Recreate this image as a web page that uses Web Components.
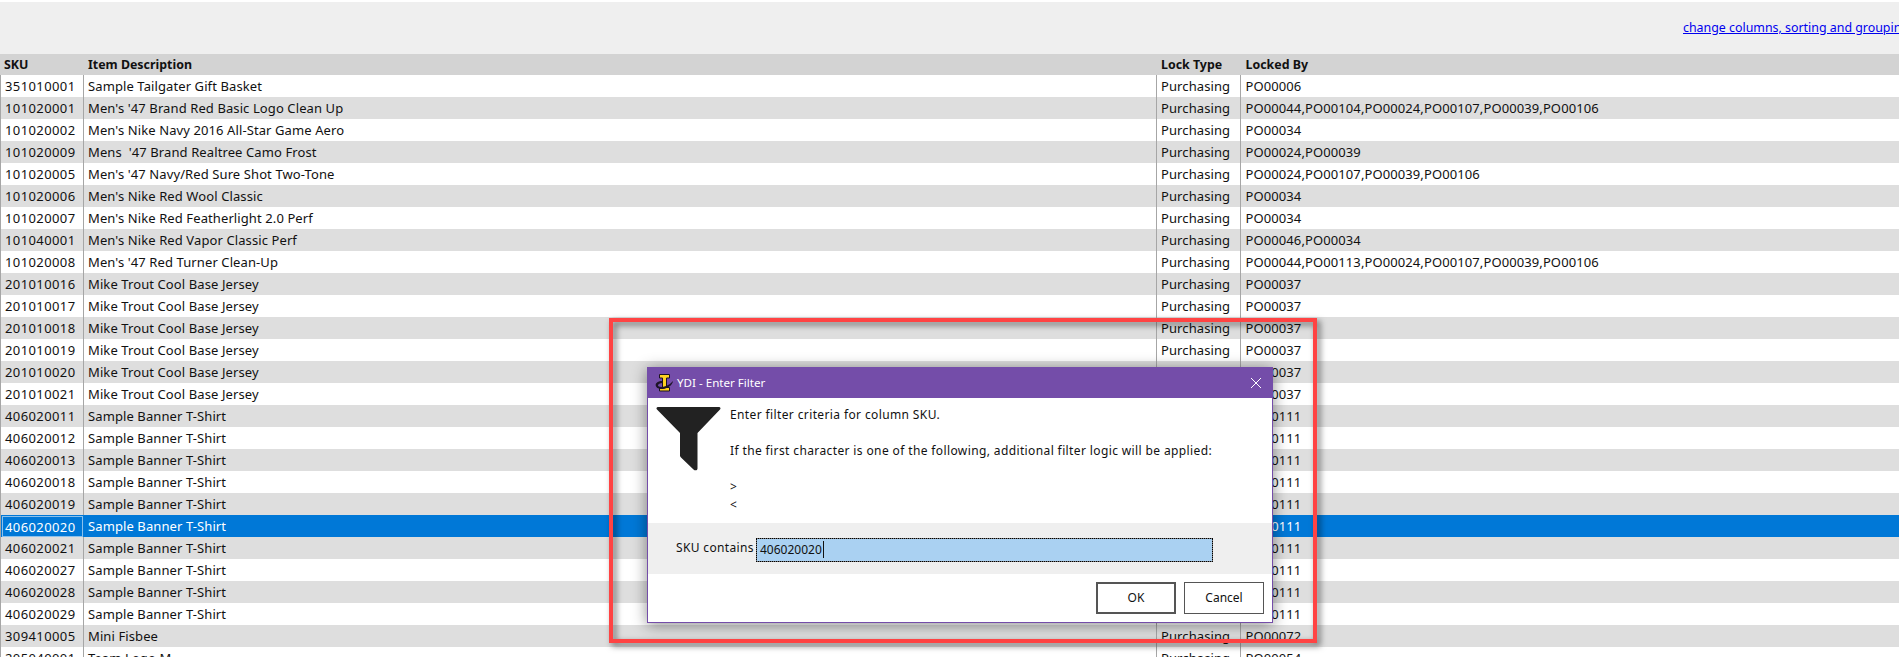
<!DOCTYPE html>
<html>
<head>
<meta charset="utf-8">
<title>Locked Items</title>
<style>
  html, body { margin: 0; padding: 0; height: 657px; overflow: hidden; background: #fff; }
  body { font: 13px "Noto Sans", sans-serif; color: #111; position: relative; }
</style>
</head>
<body>
<grid-toolbar><a href="#">change columns, sorting and grouping</a></grid-toolbar>
<lock-grid></lock-grid>
<red-callout></red-callout>
<filter-dialog></filter-dialog>

<script>
class GridToolbar extends HTMLElement {
  constructor() {
    super();
    this.attachShadow({mode: 'open'}).innerHTML = `
      <style>
        :host { display: block; margin-top: 2px; height: 52px; background: #efefef; overflow: hidden; }
        .links { padding: 17px 0 0 1683px; white-space: nowrap; font-size: 12.4px; line-height: 18px; }
        ::slotted(a) { color: #0000ee; text-decoration: underline; }
      </style>
      <div class="links"><slot></slot></div>
    `;
  }
}
customElements.define('grid-toolbar', GridToolbar);

class LockRow extends HTMLElement {
  constructor() {
    super();
    this.attachShadow({mode: 'open'}).innerHTML = `
      <style>
        :host { display: grid; grid-template-columns: 84px 1073px 84px 1fr; height: 22px; line-height: 23px; background: #fff; white-space: nowrap; }
        :host([alt]) { background: #dedede; }
        :host([head]) { height: 21px; line-height: 21px; background: #d3d3d3; font-weight: 700; font-size: 12.4px; }
        :host([selected]) { background: #0078d7; color: #fff; }
        .cell { box-sizing: border-box; padding-left: 4px; border-right: 1px solid #a6a6a6; overflow: hidden; letter-spacing: .1px; }
        .sku { border-left: 1px solid #a6a6a6; letter-spacing: .4px; }
        .by { border-right: 0; padding-left: 4.5px; }
        :host([head]) .cell { border-color: transparent; letter-spacing: 0; }
        :host([head]) .sku { border-left: 0; }
        :host([selected]) .cell { border-color: transparent; }
        :host([selected]) .sku { border-left-color: #a6a6a6; }
        :host([selected]) .sku span { display: block; margin: 1px 0 1px -3px; padding-left: 2px; height: 19px; line-height: 21px; border: 1px solid #8cc1ec; }
      </style>
      <div class="cell sku"><span><slot name="sku"></slot></span></div>
      <div class="cell"><slot name="desc"></slot></div>
      <div class="cell"><slot name="type"></slot></div>
      <div class="cell by"><slot name="by"></slot></div>
    `;
  }
}
customElements.define('lock-row', LockRow);

const ROWS = [
  ['351010001', 'Sample Tailgater Gift Basket', 'PO00006'],
  ['101020001', "Men's '47 Brand Red Basic Logo Clean Up", 'PO00044,PO00104,PO00024,PO00107,PO00039,PO00106'],
  ['101020002', "Men's Nike Navy 2016 All-Star Game Aero", 'PO00034'],
  ['101020009', "Mens\u00a0 '47 Brand Realtree Camo Frost", 'PO00024,PO00039'],
  ['101020005', "Men's '47 Navy/Red Sure Shot Two-Tone", 'PO00024,PO00107,PO00039,PO00106'],
  ['101020006', "Men's Nike Red Wool Classic", 'PO00034'],
  ['101020007', "Men's Nike Red Featherlight 2.0 Perf", 'PO00034'],
  ['101040001', "Men's Nike Red Vapor Classic Perf", 'PO00046,PO00034'],
  ['101020008', "Men's '47 Red Turner Clean-Up", 'PO00044,PO00113,PO00024,PO00107,PO00039,PO00106'],
  ['201010016', 'Mike Trout Cool Base Jersey', 'PO00037'],
  ['201010017', 'Mike Trout Cool Base Jersey', 'PO00037'],
  ['201010018', 'Mike Trout Cool Base Jersey', 'PO00037'],
  ['201010019', 'Mike Trout Cool Base Jersey', 'PO00037'],
  ['201010020', 'Mike Trout Cool Base Jersey', 'PO00037'],
  ['201010021', 'Mike Trout Cool Base Jersey', 'PO00037'],
  ['406020011', 'Sample Banner T-Shirt', 'PO00111'],
  ['406020012', 'Sample Banner T-Shirt', 'PO00111'],
  ['406020013', 'Sample Banner T-Shirt', 'PO00111'],
  ['406020018', 'Sample Banner T-Shirt', 'PO00111'],
  ['406020019', 'Sample Banner T-Shirt', 'PO00111'],
  ['406020020', 'Sample Banner T-Shirt', 'PO00111'],
  ['406020021', 'Sample Banner T-Shirt', 'PO00111'],
  ['406020027', 'Sample Banner T-Shirt', 'PO00111'],
  ['406020028', 'Sample Banner T-Shirt', 'PO00111'],
  ['406020029', 'Sample Banner T-Shirt', 'PO00111'],
  ['309410005', 'Mini Fisbee', 'PO00072'],
  ['205040001', 'Team Logo M', 'PO00054']
];

class LockGrid extends HTMLElement {
  constructor() {
    super();
    this.attachShadow({mode: 'open'}).innerHTML = `
      <style>
        :host { display: block; }
      </style>
      <slot></slot>
    `;
  }
  connectedCallback() {
    this.appendChild(this.makeRow('SKU', 'Item Description', 'Lock Type', 'Locked By', 'head'));
    ROWS.forEach((r, i) => {
      const flag = r[0] === '406020020' ? 'selected' : (i % 2 ? 'alt' : '');
      this.appendChild(this.makeRow(r[0], r[1], 'Purchasing', r[2], flag));
    });
  }
  makeRow(sku, desc, type, by, flag) {
    const row = document.createElement('lock-row');
    if (flag) row.setAttribute(flag, '');
    Object.entries({sku, desc, type, by}).forEach(([name, text]) => {
      const span = document.createElement('span');
      span.slot = name;
      span.textContent = text;
      row.appendChild(span);
    });
    return row;
  }
}
customElements.define('lock-grid', LockGrid);

// red rectangle somebody drew on the screenshot
class RedCallout extends HTMLElement {
  constructor() {
    super();
    this.attachShadow({mode: 'open'}).innerHTML = `
      <style>
        :host { display: block; position: absolute; left: 609px; top: 318px; width: 708px; height: 325px; box-sizing: border-box; border: 4px solid #ff4343; filter: drop-shadow(3px 3px 3px rgba(0,0,0,.55)); }
      </style>
    `;
  }
}
customElements.define('red-callout', RedCallout);

class FilterDialog extends HTMLElement {
  constructor() {
    super();
    this.attachShadow({mode: 'open'}).innerHTML = `
      <style>
        :host { display: flex; flex-direction: column; position: absolute; left: 647px; top: 367px; width: 626px; height: 256px; box-sizing: border-box; border: 1px solid #744da9; border-top: 0; background: #fff; box-shadow: 0 2px 14px rgba(0,0,0,.45); font-size: 12px; color: #111; }
        .title { display: flex; align-items: center; height: 31px; background: #744da9; color: #fff; padding: 0 11px 0 7px; font-size: 11.6px; }
        .title svg.logo { margin-right: 4px; }
        .title span { flex: 1; }
        .body { display: flex; height: 125px; padding: 8px 0 0 8px; box-sizing: border-box; }
        .msg { margin-left: 9px; line-height: 18px; white-space: pre-line; letter-spacing: .38px; }
        .band { display: flex; align-items: center; height: 51px; background: #efefef; padding: 0 0 0 28px; }
        .band label { width: 80px; letter-spacing: .35px; margin-top: -3px; }
        .input { box-sizing: border-box; width: 457px; height: 24px; margin-top: 2px; margin-left: 0; padding: 2px 0 0 3px; background: #aad1f2; outline: 1px dotted #000; outline-offset: -1px; border: 1px solid #7a7a7a; line-height: 18px; }
        .input i { display: inline-block; width: 1px; height: 17px; background: #111; vertical-align: top; margin-left: 1px; }
        .foot { display: flex; justify-content: flex-end; gap: 8px; padding: 8px 8px 0 0; }
        .btn { box-sizing: border-box; width: 80px; height: 32px; padding-bottom: 2px; border: 1px solid #555; display: flex; align-items: center; justify-content: center; background: #fff; }
        .btn.def { border: 2px solid #555; }
      </style>
      <div class="title">
        <svg class="logo" width="18" height="18" viewBox="0 0 18 18">
          <path d="M4.5 .5H14.5V4H11.5V13.5H14.5V17H4.5V13.5H7.5V4H4.5Z" fill="#ffd21f" stroke="#1b1420" stroke-width="1"/>
          <path d="M1 9.5C2.5 7.5 5 7 7.5 7V9C5 9 3 10 3 11.5C3 13 7 13.5 11 12C14 11 16 9 18 7C17.5 11 13 14.5 8 15C3 15.5 -.5 13 1 9.5Z" fill="#1c1426"/>
        </svg>
        <span>YDI - Enter Filter</span>
        <svg width="10" height="10" viewBox="0 0 10 10"><path d="M0 0L10 10M10 0L0 10" stroke="#fff" stroke-width="1"/></svg>
      </div>
      <div class="body">
        <svg width="65" height="65" viewBox="0 0 65 65" style="flex:none">
          <path d="M2 1H63C64.5 1 65 2.5 64 3.5L41.5 27V62.5C41.5 64.5 39 65 37.5 63.5L25 51.5C24 50.5 24 50 24 49V27L1 3.5C0 2.5 .5 1 2 1Z" fill="#222"/>
        </svg>
        <div class="msg">Enter filter criteria for column SKU.

If the first character is one of the following, additional filter logic will be applied:

&gt;
&lt;</div>
      </div>
      <div class="band">
        <label>SKU contains</label>
        <div class="input">406020020<i></i></div>
      </div>
      <div class="foot">
        <div class="btn def">OK</div>
        <div class="btn">Cancel</div>
      </div>
    `;
  }
}
customElements.define('filter-dialog', FilterDialog);
</script>
</body>
</html>
